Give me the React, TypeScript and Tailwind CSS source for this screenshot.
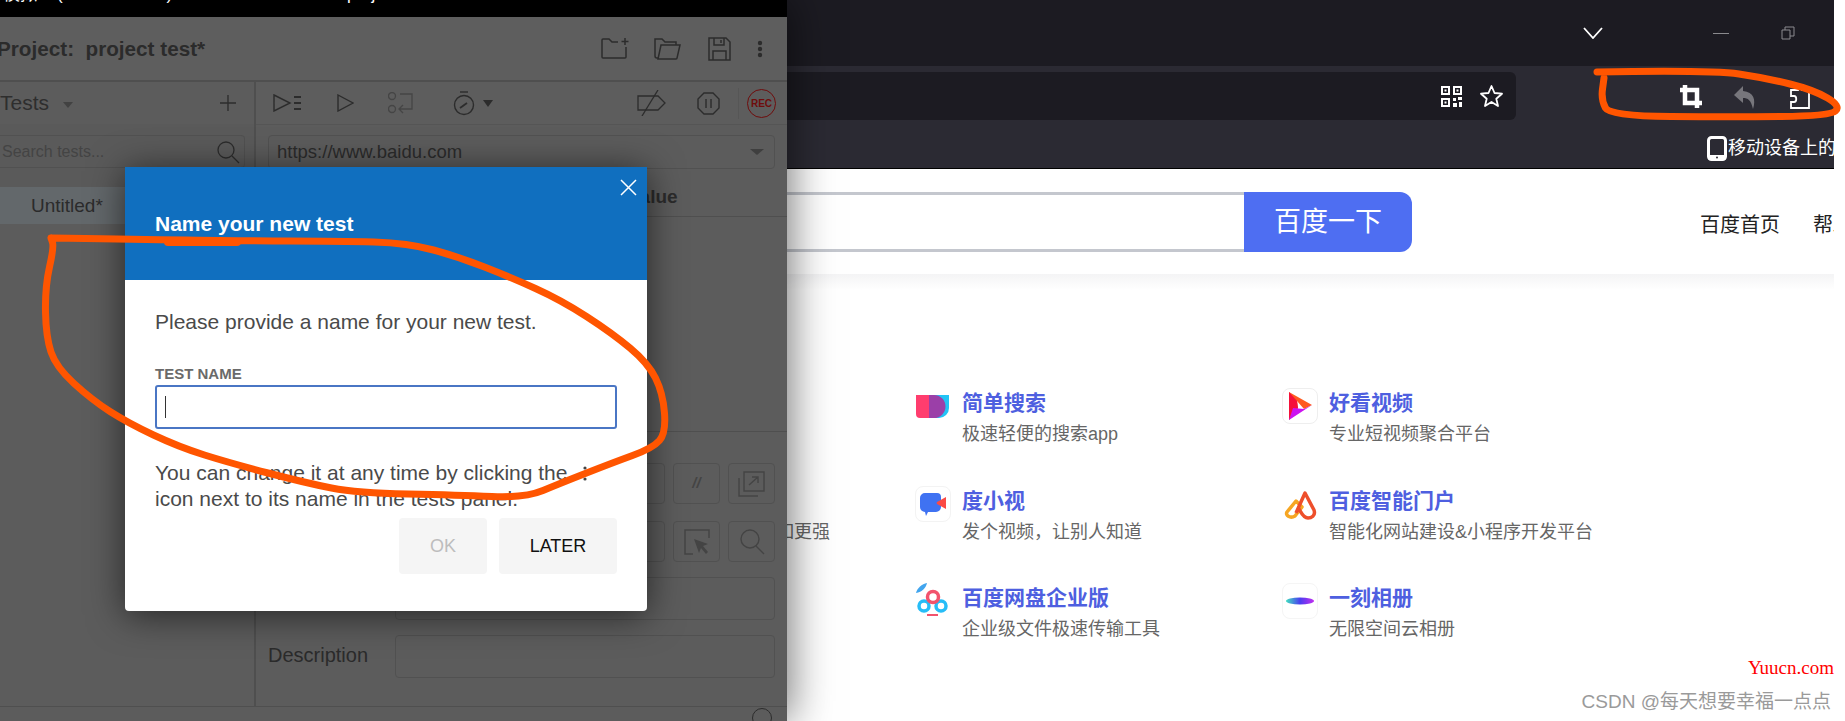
const ITEMS = [
  { id: 'jiandan', col: 2, row: 1, title: '简单搜索', sub: '极速轻便的搜索app' },
  { id: 'haokan', col: 3, row: 1, title: '好看视频', sub: '专业短视频聚合平台' },
  { id: 'duxiaoshi', col: 2, row: 2, title: '度小视', sub: '发个视频，让别人知道' },
  { id: 'menhu', col: 3, row: 2, title: '百度智能门户', sub: '智能化网站建设&小程序开发平台' },
  { id: 'pan', col: 2, row: 3, title: '百度网盘企业版', sub: '企业级文件极速传输工具' },
  { id: 'yike', col: 3, row: 3, title: '一刻相册', sub: '无限空间云相册' },
]

const COL_CLASS: Record<number, string> = { 2: 'col-start-2', 3: 'col-start-3' }
const ROW_CLASS: Record<number, string> = { 1: 'row-start-1', 2: 'row-start-2', 3: 'row-start-3' }

// Pen stroke points, joined with quadratic curves through their midpoints
const DIALOG_MARK = [
  [51, 238], [237, 241], [340, 241], [408, 243], [459, 257], [510, 277], [561, 300], [612, 333],
  [648, 363], [663, 393], [666, 433], [653, 448], [612, 463], [561, 483], [525, 498], [459, 495],
  [357, 493], [306, 483], [230, 463], [179, 447], [128, 423], [92, 400], [56, 367], [46, 337],
  [45, 287], [54, 247], [51, 238],
]

const TOOLBAR_MARK = [
  [1597, 72], [1712, 70], [1766, 78], [1814, 90], [1841, 106], [1830, 116], [1732, 117],
  [1610, 116], [1601, 100], [1604, 78],
]

function smoothPath(points: number[][]) {
  let d = `M${points[0][0]} ${points[0][1]}`
  for (let i = 1; i < points.length - 1; i++) {
    const [x, y] = points[i]
    const [nx, ny] = points[i + 1]
    d += ` Q${x} ${y} ${(x + nx) / 2} ${(y + ny) / 2}`
  }
  const last = points[points.length - 1]
  return `${d} L${last[0]} ${last[1]}`
}

function ProductIcon({ id }: { id: string }) {
  if (id === 'jiandan') {
    return (
      <svg width="36" height="36" viewBox="0 0 36 36">
        <path d="M1 7h18a11.500 11.500 0 0 1 0 23H5a4 4 0 0 1-4-4z" fill="#ff3d6e" />
        <path d="M14 7h20v13a10 10 0 0 1-10 10h-10z" fill="#22c3f5" />
        <path d="M14 7h5a11.500 11.500 0 0 1 0 23h-5z" fill="#9b3fa8" />
      </svg>
    )
  }
  if (id === 'haokan') {
    return (
      <div className="w-9 h-9 rounded-lg border border-[#eeeeee] flex items-center justify-center">
        <svg width="28" height="32" viewBox="0 0 28 32">
          <path d="M3 2l23 13-8 4-7-8 1 7-9 12z" fill="#ff5a1f" />
          <path d="M3 2l8 9 1 7-9 12z" fill="#f5103a" />
          <path d="M26 15L3 30l4-12 11 1z" fill="#cc12f0" />
        </svg>
      </div>
    )
  }
  if (id === 'duxiaoshi') {
    return (
      <div className="w-9 h-9 rounded-lg border border-[#f3f3f3] flex items-center justify-center">
        <svg width="28" height="26" viewBox="0 0 28 26">
          <path d="M6 2h12a4 4 0 0 1 4 4v10a5 5 0 0 1-5 5H9l-2 4-1-4a5 5 0 0 1-5-5V7a5 5 0 0 1 5-5z" fill="#3f72f2" />
          <path d="M27 6v12l-9-5a1.500 1.500 0 0 1 0-2z" fill="#fb4a45" />
        </svg>
      </div>
    )
  }
  if (id === 'menhu') {
    return (
      <svg width="36" height="36" viewBox="0 0 36 36" fill="none">
        <path d="M5 26l9-11 6 6-7 9c-5 3-10-1-8-4z" stroke="#f6a623" strokeWidth="3.500" strokeLinejoin="round" />
        <path d="M14 27l9-20 9 17c2 6-3 8-6 8-5 0-7-6-9-9" stroke="#ee4f2b" strokeWidth="3.500" strokeLinejoin="round" />
      </svg>
    )
  }
  if (id === 'pan') {
    return (
      <svg width="36" height="38" viewBox="0 0 36 38" fill="none">
        <path d="M1 11c1-5 6-9 11-10-1 5-5 9-11 10z" fill="#41a5ee" />
        <circle cx="9" cy="24" r="5" stroke="#27bdf7" strokeWidth="3.500" />
        <circle cx="26" cy="24" r="5" stroke="#27bdf7" strokeWidth="3.500" />
        <circle cx="18" cy="15" r="5.500" stroke="#f2536d" strokeWidth="3.500" />
        <path d="M12 33h11" stroke="#f2536d" strokeWidth="2" />
      </svg>
    )
  }
  return (
    <div className="w-9 h-9 rounded-lg border border-[#f5f5f5] flex items-center justify-center">
      <svg width="28" height="8" viewBox="0 0 28 8">
        <defs>
          <linearGradient id="yike" x1="0" x2="1">
            <stop offset="0" stopColor="#3fe0c0" />
            <stop offset="0.500" stopColor="#4b3df0" />
            <stop offset="1" stopColor="#c22ff0" />
          </linearGradient>
        </defs>
        <ellipse cx="14" cy="4" rx="14" ry="3.500" fill="url(#yike)" />
      </svg>
    </div>
  )
}

function ToolButton({ children }: { children?: React.ReactNode }) {
  return (
    <div className="w-[47px] h-[41px] rounded border border-[#515151] flex items-center justify-center shrink-0">
      {children}
    </div>
  )
}

function LeftWindow() {
  return (
    <div className="relative z-10 w-[787px] h-[721px] shrink-0 flex flex-col bg-[#5c5c5c] text-[#262626] shadow-[3px_0_40px_rgba(0,0,0,0.55)]">
      {/* Title bar, only the bottoms of the letters show */}
      <div className="h-[17px] bg-black overflow-hidden text-white text-[17px] leading-[17px] whitespace-nowrap">
        <div className="-mt-[14px] flex">
          <span className="ml-[3px] w-[54px]">模拟</span>
          <span className="w-[290px]">(Selenium IDE)</span>
          <span className="w-[330px]">project</span>
          <span className="w-[70px]">—</span>
          <span>×</span>
        </div>
      </div>

      {/* Project header */}
      <div className="h-[65px] shrink-0 flex items-center border-b-2 border-[#4f4f4f] bg-[#5e5e5e]">
        <h1 className="-ml-[3px] mt-[1px] text-[20.700px] font-bold text-[#2b2b2b] whitespace-pre">Project:  project test*</h1>
        <div className="ml-auto flex items-center">
          <svg className="mr-[23px]" width="30" height="22" viewBox="0 0 30 22" fill="none" stroke="#2c2c2c" strokeWidth="1.500">
            <path d="M17 4h-6l-3-3H2a1 1 0 0 0-1 1v17a1 1 0 0 0 1 1h22a1 1 0 0 0 1-1V9" />
            <path d="M24 0v7M20.500 3.500h7" />
          </svg>
          <svg className="mr-[27px]" width="27" height="23" viewBox="0 0 27 23" fill="none" stroke="#2c2c2c" strokeWidth="1.500">
            <path d="M4 21H3a2 2 0 0 1-2-2V2h7l3 3h11v3" />
            <path d="M7 8h19l-3 13a1 1 0 0 1-1 1H4z" />
          </svg>
          <svg className="mr-[26px]" width="23" height="24" viewBox="0 0 23 24" fill="none" stroke="#2c2c2c" strokeWidth="1.500">
            <path d="M1 1h17l4 4v18H1z" />
            <path d="M6 1v7h10V1M13 3v3M5 23v-9h13v9" />
          </svg>
          <svg className="mr-[24px]" width="6" height="18" viewBox="0 0 6 18" fill="#2c2c2c">
            <circle cx="3" cy="3" r="2.200" />
            <circle cx="3" cy="9" r="2.200" />
            <circle cx="3" cy="15" r="2.200" />
          </svg>
        </div>
      </div>

      <div className="flex-1 min-h-0 flex">
        {/* Tests sidebar */}
        <aside className="w-[256px] shrink-0 border-r-2 border-[#4f4f4f] flex flex-col">
          <div className="h-[42px] flex items-center text-[21px]">
            <span className="text-[#2e2e2e]">Tests</span>
            <span className="ml-[14px] mt-[3px] w-0 h-0 border-x-[5px] border-x-transparent border-t-[6px] border-t-[#424242]" />
            <svg className="ml-auto mr-[18px]" width="16" height="16" viewBox="0 0 16 16" stroke="#2c2c2c" strokeWidth="1.300">
              <path d="M8 0v16M0 8h16" />
            </svg>
          </div>
          <div className="h-[63px] bg-[#5a5a5a] pt-[11px]">
            <div className="h-[33px] w-[245px] rounded-r border border-l-0 border-[#515151] flex items-center pl-[2px] pr-[4px] text-[16px] text-[#444444]">
              Search tests...
              <svg className="ml-auto" width="24" height="24" viewBox="0 0 24 24" fill="none" stroke="#2c2c2c" strokeWidth="1.300">
                <circle cx="10" cy="10" r="8" />
                <path d="M16 16l7 7" />
              </svg>
            </div>
          </div>
          <div className="h-[37px] bg-[#63686b] flex items-center pl-[31px] pt-[2px] text-[19px] text-[#2b2b2b]">Untitled*</div>
        </aside>

        {/* Test editor */}
        <main className="flex-1 min-w-0 flex flex-col">
          <div className="h-[43px] shrink-0 relative flex items-center border-b border-[#555555] bg-[#5d5d5d]">
            <svg className="ml-[17px]" width="29" height="18" viewBox="0 0 29 18" fill="none" stroke="#2c2c2c" strokeWidth="1.400">
              <path d="M1 1l16 8-16 8z" />
              <path d="M21 3h7M21 9h7M21 15h7" strokeWidth="2" />
            </svg>
            <svg className="ml-[35px]" width="17" height="18" viewBox="0 0 17 18" fill="none" stroke="#2c2c2c" strokeWidth="1.400">
              <path d="M1 1l15 8-15 8z" />
            </svg>
            <svg className="ml-[34px]" width="26" height="22" viewBox="0 0 26 22" fill="none" stroke="#454545" strokeWidth="1.300">
              <circle cx="4" cy="4" r="3.500" />
              <circle cx="4" cy="17" r="3.500" />
              <path d="M12 2h12v15H11M15 13l-4 4 4 4" />
            </svg>
            <svg className="ml-[39px]" width="22" height="25" viewBox="0 0 22 25" fill="none" stroke="#2c2c2c" strokeWidth="1.400">
              <path d="M7 1h8" />
              <circle cx="11" cy="14" r="9.500" />
              <path d="M7 17l7-5" strokeWidth="1.800" />
            </svg>
            <span className="ml-[8px] w-0 h-0 border-x-[5px] border-x-transparent border-t-[7px] border-t-[#2c2c2c]" />
            <svg className="ml-[144px]" width="29" height="26" viewBox="0 0 29 26" fill="none" stroke="#2c2c2c" strokeWidth="1.300">
              <path d="M1 6h20l7 7-7 7H1z" />
              <path d="M21 0L5 26" />
            </svg>
            <svg className="ml-[31px]" width="23" height="23" viewBox="0 0 23 23" fill="none" stroke="#2c2c2c" strokeWidth="1.400">
              <path d="M7 1h9l6 6v9l-6 6H7l-6-6V7z" />
              <path d="M9 7v9M14 7v9" />
            </svg>
            <div className="ml-[18px] w-px h-[31px] bg-[#565656]" />
            <div className="ml-[8px] w-[29px] h-[29px] rounded-full border border-[#6f0c0c] flex items-center justify-center text-[10px] font-bold text-[#6f0c0c]">
              REC
            </div>
          </div>

          <div className="px-[12px] pt-[10px] shrink-0">
            <div className="h-[34px] rounded border border-[#515151] flex items-center pl-[8px] pr-[10px] text-[18.500px] text-[#2b2b2b]">
              https://www.baidu.com
              <span className="ml-auto w-0 h-0 border-x-[7px] border-x-transparent border-t-[6px] border-t-[#3f3f3f]" />
            </div>
          </div>

          <div className="h-[48px] shrink-0 border-b border-[#4f4f4f] flex items-center pl-[372px] pt-[9px] text-[19px] font-bold text-[#2b2b2b]">
            Value
          </div>

          <div className="flex-1" />

          {/* Command form, its first labels lie behind the dialog */}
          <div className="shrink-0 border-t border-[#4f4f4f] pl-[139px] pr-[12px] pt-[31px] pb-[28px] flex flex-col text-[20px] text-[#2b2b2b]">
            <div className="flex items-center gap-[8px] h-[41px]">
              <div className="flex-1 h-full rounded border border-[#515151]" />
              <ToolButton>
                <span className="italic font-bold text-[#444444] text-[15px]">//</span>
              </ToolButton>
              <ToolButton>
                <svg width="27" height="26" viewBox="0 0 27 26" fill="none" stroke="#444444" strokeWidth="1.400">
                  <path d="M6 1h20v19H6zM1 7v18h19M11 14l9-8M14 6h6v6" />
                </svg>
              </ToolButton>
            </div>
            <div className="flex items-center gap-[8px] h-[41px] mt-[17px]">
              <div className="flex-1 h-full rounded border border-[#515151]" />
              <ToolButton>
                <svg width="26" height="26" viewBox="0 0 26 26" fill="none" stroke="#444444" strokeWidth="1.500">
                  <path d="M9 25H1V1h24v8" />
                  <path d="M10 10l14 5-5 2 5 6-2 2-5-6-2 5z" fill="#444444" stroke="none" />
                </svg>
              </ToolButton>
              <ToolButton>
                <svg width="26" height="26" viewBox="0 0 26 26" fill="none" stroke="#444444" strokeWidth="1.400">
                  <circle cx="11" cy="10" r="9" />
                  <path d="M17 17l8 8" />
                </svg>
              </ToolButton>
            </div>
            <div className="h-[43px] mt-[15px] rounded border border-[#515151]" />
            <div className="flex items-center h-[43px] mt-[15px] -ml-[127px]">
              <span className="w-[127px] -mt-[3px]">Description</span>
              <div className="flex-1 h-full rounded border border-[#515151]" />
            </div>
          </div>
        </main>
      </div>

      {/* Footer */}
      <div className="h-[15px] shrink-0 border-t border-[#4f4f4f] overflow-hidden flex justify-end pr-[15px]">
        <div className="mt-[1px] w-[20px] h-[20px] rounded-full border border-[#2c2c2c]" />
      </div>

      <NameDialog />
    </div>
  )
}

function NameDialog() {
  return (
    <div className="absolute left-[125px] top-[167px] w-[522px] h-[444px] bg-white rounded-b-sm shadow-[0_4px_36px_rgba(0,0,0,0.6)] flex flex-col">
      <div className="relative h-[113px] shrink-0 bg-[#106fbf] pl-[30px] pt-[45px] text-[21px] leading-[24px] font-bold text-white">
        Name your new test
        <svg className="absolute right-[10px] top-[12px]" width="17" height="17" viewBox="0 0 17 17" stroke="white" strokeWidth="1.500">
          <path d="M1 1l15 15M16 1L1 16" />
        </svg>
      </div>
      <div className="flex-1 px-[30px] pt-[29px] text-[21px] leading-[26px] text-[#4a4a4a]">
        <p>Please provide a name for your new test.</p>
        <div className="mt-[32px] text-[15px] leading-[14px] font-bold text-[#6a6a6a]">TEST NAME</div>
        <div className="mt-[4px] h-[44px] rounded-[3px] border-2 border-[#4a76c4] flex items-center pl-[8px]">
          <div className="w-px h-[22px] bg-[#333333]" />
        </div>
        <p className="mt-[31px]">
          You can change it at any time by clicking the
          <svg className="inline-block ml-[16px] align-[-1px]" width="4" height="15" viewBox="0 0 4 15" fill="#444444">
            <circle cx="2" cy="2" r="1.600" />
            <circle cx="2" cy="7.500" r="1.600" />
            <circle cx="2" cy="13" r="1.600" />
          </svg>
          <br />
          icon next to its name in the tests panel.
        </p>
        <div className="mt-[6px] flex justify-end gap-[12px] text-[18px]">
          <div className="w-[88px] h-[56px] rounded bg-[#f5f5f5] flex items-center justify-center text-[#bdbdbd]">OK</div>
          <div className="w-[118px] h-[56px] rounded bg-[#f5f5f5] flex items-center justify-center text-[#111111]">LATER</div>
        </div>
      </div>
    </div>
  )
}

function BrowserWindow() {
  return (
    <div className="w-[1047px] shrink-0 flex flex-col overflow-hidden">
      {/* Tab strip */}
      <div className="h-[66px] shrink-0 bg-[#1c1b22] flex items-center">
        <svg className="ml-[796px] -mt-[1px]" width="20" height="12" viewBox="0 0 20 12" fill="none" stroke="white" strokeWidth="1.800">
          <path d="M1 1l9 10 9-10" />
        </svg>
        <div className="ml-[110px] w-[16px] h-px bg-[#8a8a8e]" />
        <svg className="ml-[52px]" width="14" height="14" viewBox="0 0 14 14" fill="none" stroke="#8a8a8e">
          <path d="M1 4h8v9H1zM4 4V1h9v9H9" />
        </svg>
      </div>

      {/* Address row */}
      <div className="h-[60px] shrink-0 bg-[#2b2a33] flex items-start pt-[6px]">
        <div className="w-[729px] h-[48px] rounded-r-md bg-[#1c1b22] flex items-center justify-end pr-[12px] gap-[17px]">
          <svg width="21" height="21" viewBox="0 0 21 21" fill="white">
            <path fillRule="evenodd" d="M0 0h9v9H0zM2 2v5h5V2zM12 0h9v9h-9zM14 2v5h5V2zM0 12h9v9H0zM2 14v5h5v-5z" />
            <path d="M3.500 3.500h2v2h-2zM15.500 3.500h2v2h-2zM3.500 15.500h2v2h-2zM12 12h3v3h-3zM17 11h4v3h-4zM12 17h4v4h-4zM18 16h3v5h-3z" />
          </svg>
          <svg width="25" height="24" viewBox="0 0 24 24" fill="none" stroke="white" strokeWidth="1.800" strokeLinejoin="round">
            <path d="M12 2l3 7 7.500.7-5.700 5 1.700 7.300L12 18l-6.500 4 1.700-7.300-5.700-5L9 9z" />
          </svg>
        </div>
        <svg className="ml-[164px] mt-[13px]" width="22" height="23" viewBox="0 0 22 23" fill="none" stroke="white" strokeWidth="4.500">
          <path d="M5 0v18h17M0 5h17v18" />
        </svg>
        <svg className="ml-[32px] mt-[14px]" width="22" height="23" viewBox="0 0 22 23" fill="#77767c">
          <path d="M9 0L0 9l9 8v-5c5 0 8 2 10 11 3-9 1-17-10-18z" />
        </svg>
        <svg className="ml-[33px] mt-[11px]" width="22" height="26" viewBox="0 0 22 26" fill="none" stroke="white" strokeWidth="1.800">
          <path d="M2 7h7V5c0-4 4-4 4 0v2h7v18H2v-6h3c3 0 3-6 0-6H2z" />
        </svg>
      </div>

      {/* Bookmark row */}
      <div className="h-[43px] shrink-0 bg-[#2b2a33] border-b border-black flex items-center justify-end text-[18px] text-white whitespace-nowrap overflow-hidden">
        <div className="w-[127px] mt-[2px] flex items-center gap-[1px]">
          <svg className="shrink-0" width="20" height="25" viewBox="0 0 20 25">
            <rect x="1.500" y="1.500" width="17" height="22" rx="3" fill="none" stroke="white" strokeWidth="3" />
            <rect x="1" y="19" width="18" height="5" rx="2" fill="white" />
            <circle cx="10" cy="21.500" r="1" fill="#2b2a33" />
          </svg>
          <span>移动设备上的书签</span>
        </div>
      </div>

      {/* Baidu page */}
      <div className="flex-1 min-h-0 bg-white">
        <header className="h-[105px] flex items-start pt-[23px] overflow-hidden whitespace-nowrap">
          <div className="w-[457px] h-[60px] shrink-0 border-y-[3px] border-[#c4c7ce]" />
          <div className="w-[168px] h-[60px] shrink-0 rounded-r-[12px] bg-[#4e6ef2] flex items-center justify-center text-[27px] text-white">
            百度一下
          </div>
          <div className="ml-[288px] mt-[20px] flex gap-[33px] text-[20px] leading-[26px] text-[#222222] shrink-0">
            <span>百度首页</span>
            <span>帮助</span>
          </div>
        </header>
        <div className="h-[16px] bg-gradient-to-b from-[#f4f4f5] to-white" />
        <div className="grid grid-cols-[128px_367px_auto] grid-rows-[97.500px_97.500px_97.500px] pt-[98px]">
          <div className="col-start-1 row-start-2 w-[43px] pt-[31px] flex justify-end whitespace-nowrap text-[18px] leading-[30px] text-[#666666]">
            如更强
          </div>
          {ITEMS.map((item) => (
            <div key={item.id} className={`${COL_CLASS[item.col]} ${ROW_CLASS[item.row]} flex`}>
              <div className="w-9 h-9 shrink-0 flex items-center justify-center">
                <ProductIcon id={item.id} />
              </div>
              <div className="ml-[11px] whitespace-nowrap">
                <div className="text-[21px] leading-[30px] font-bold text-[#4e5fe0]">{item.title}</div>
                <div className="mt-px text-[18px] leading-[30px] text-[#666666]">{item.sub}</div>
              </div>
            </div>
          ))}
        </div>
      </div>
    </div>
  )
}

export default function App() {
  return (
    <div className="relative w-[1845px] h-[721px] overflow-hidden flex bg-white font-['Liberation_Sans','Noto_Sans_CJK_SC',sans-serif]">
      <LeftWindow />
      <BrowserWindow />

      {/* Watermarks */}
      <div className="absolute right-[11px] top-[656px] text-[19px] leading-[24px] text-[#ff0000] font-['Liberation_Serif',serif]">Yuucn.com</div>
      <div className="absolute right-[14px] top-[690px] text-[19px] leading-[24px] text-[#9a9a9a]">CSDN @每天想要幸福一点点</div>

      {/* Hand drawn marks over the screenshot */}
      <svg className="absolute inset-0 z-20 pointer-events-none" width="1845" height="721" fill="none" stroke="#ff5500" strokeWidth="7" strokeLinecap="round" strokeLinejoin="round">
        <path d={smoothPath(DIALOG_MARK)} />
        <path d="M168 242H237" strokeWidth="8" />
        <path d={smoothPath(TOOLBAR_MARK)} />
      </svg>
    </div>
  )
}
